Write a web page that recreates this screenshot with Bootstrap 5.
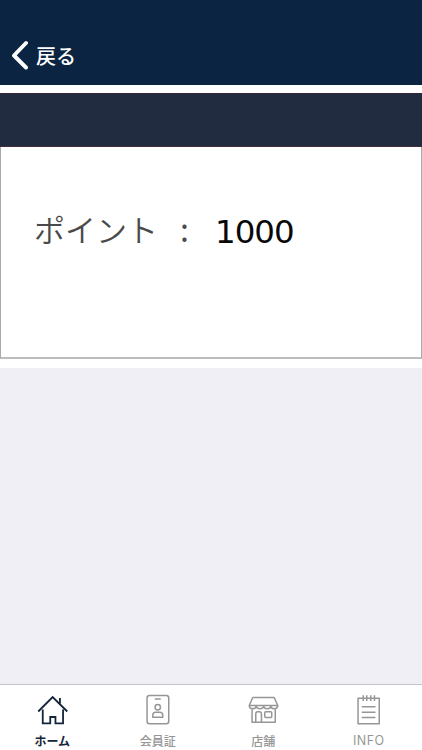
<!DOCTYPE html>
<html lang="ja">
<head>
<meta charset="utf-8">
<meta name="viewport" content="width=device-width, initial-scale=1">
<title>ポイント</title>
<link href="https://cdn.jsdelivr.net/npm/bootstrap@5.3.0/dist/css/bootstrap.min.css" rel="stylesheet">
<style>
body{background:#efeff5;font-family:"Liberation Sans","Noto Sans CJK JP",sans-serif;overflow:hidden}
.app-header{background:#0a2441;height:85px;padding:27px 0 0 11px}
.back-link{font-size:20px;font-weight:500;line-height:56px;font-family:"Noto Sans CJK JP",sans-serif}
.back-link svg{margin-bottom:2px}
.back-link span{margin-left:7px;padding-top:1px}
.panel-wrap{background:#fff;padding:8px 0 9px;height:283px}
.point-panel{height:266px;border:1px solid #aaa;border-top:0;border-bottom:2px solid #bdbdbd;border-radius:0}
.panel-bar{height:54px;margin:0 -1px;background:#222c40;border-top:1px solid #352637;border-bottom:1px solid #402d3a}
.point-row{padding:57px 0 0 33px;line-height:50px;font-family:"Noto Sans CJK JP",sans-serif;color:#4a4a4a}
.point-label{font-size:31px;font-weight:350;width:146px;padding-bottom:3px}
.point-colon{font-size:32px;width:35px;line-height:46px;padding-bottom:5px}
.point-value{font-family:"DejaVu Sans",sans-serif;font-size:32.500px;letter-spacing:-1px;color:#080808;padding-top:2px}
.tab-bar{height:66px;background:#fff;border-top:1px solid #c4c4cc;color:#969696}
.tab-bar a{font:500 12px/16px "Noto Sans CJK JP",sans-serif;padding-top:7px}
.tab-bar a span{padding:1px 1px 0 0}
.tab-bar a.current{color:#14243a;font-weight:700}
.tab-bar .info-text{font-family:Inter,"Liberation Sans",sans-serif;font-weight:400;font-size:12.500px;letter-spacing:.5px}
.tab-bar svg{fill:none;stroke:currentColor;stroke-width:1.5;stroke-linejoin:round}
.tab-bar a.current svg{stroke-width:1.8;stroke-linejoin:miter}
</style>
<script src="https://cdn.jsdelivr.net/npm/bootstrap@5.3.0/dist/js/bootstrap.bundle.min.js"></script>
</head>
<body class="vh-100 d-flex flex-column">
<header class="app-header">
<a href="#" class="back-link d-flex align-items-center text-white text-decoration-none">
<svg width="18" height="30" viewBox="0 0 18 30" fill="none" stroke="#fff" stroke-width="3.9" stroke-linecap="round" stroke-linejoin="round"><path d="M15 3 3 15.500 15 27.500"/></svg>
<span>戻る</span></a>
</header>
<main class="flex-grow-1">
<div class="panel-wrap">
<section class="card point-panel">
<div class="panel-bar"></div>
<div class="point-row d-flex align-items-center">
<span class="point-label">ポイント</span><span class="point-colon">:</span><span class="point-value">1000</span>
</div>
</section>
</div>
</main>
<nav class="tab-bar row g-0">
<a href="#" class="col current d-flex flex-column align-items-center text-decoration-none">
<svg width="34" height="40" viewBox="35.750 692 34 40"><path d="M38 711.500 52.400 697 67 711.500M42.500 709.500V723.300H50V717H55.200V723.300H62.800V709.500M59.700 698V703.500"/></svg>
<span>ホーム</span></a>
<a href="#" class="col d-flex flex-column align-items-center text-decoration-none text-reset">
<svg width="34" height="40" viewBox="141.250 692 34 40"><rect x="147.300" y="695.500" width="21.700" height="28.300" rx="2.500"/><path d="M155 699H161M153 717.300V715.500Q153 712.300 156 712.300H160Q163 712.300 163 715.500V717.300Z"/><circle cx="158" cy="707.300" r="2.700"/></svg>
<span>会員証</span></a>
<a href="#" class="col d-flex flex-column align-items-center text-decoration-none text-reset">
<svg width="34" height="40" viewBox="246.750 692 34 40"><path d="M252.500 697.500H274L277.500 705.500H249ZM249 705.500Q249 708.700 252.500 708.700T256 705.500Q256 708.700 259.700 708.700T263.300 705.500Q263.300 708.700 267 708.700T270.500 705.500Q270.500 708.700 274 708.700T277.500 705.500M251.800 709V722.300H275V709M255.500 722V714Q255.500 711.800 257.500 711.800H259Q261.200 711.800 261.200 714V722"/><rect x="264.500" y="711.800" width="7" height="5.700" rx="1"/></svg>
<span>店舗</span></a>
<a href="#" class="col d-flex flex-column align-items-center text-decoration-none text-reset">
<svg width="34" height="40" viewBox="352.250 692 34 40" stroke-width="1.800"><rect x="358.300" y="698.200" width="21.200" height="25.500"/><path d="M363.500 695.300V701M367 695.300V701M371 695.300V701M374.700 695.300V701M362 706.700H375.700M362 712.300H375.700M362 717.500H375.700"/></svg>
<span class="info-text">INFO</span></a>
</nav>
</body>
</html>
